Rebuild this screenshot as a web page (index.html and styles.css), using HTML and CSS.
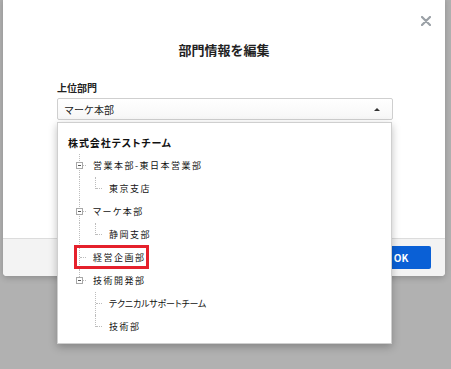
FILE: index.html
```html
<!DOCTYPE html>
<html lang="ja">
<head>
    <meta charset="UTF-8">
    <title>部門情報を編集</title>
    <link rel="stylesheet" href="styles.css">
</head>
<body>
    <div class="modal">
        <button class="close" aria-label="閉じる">
            <svg width="10" height="10" viewBox="0 0 10 10"><path d="M1 1L9 9M9 1L1 9" stroke="#9aa0a6" stroke-width="2.2" stroke-linecap="round"/></svg>
        </button>
        <div class="modal-head">
            <h2>部門情報を編集</h2>
        </div>
        <div class="modal-body">
            <label class="field-label">上位部門</label>
            <div class="select">
                <span>マーケ本部</span>
                <span class="caret"></span>
            </div>
        </div>
        <div class="modal-foot">
            <button class="btn-ok">OK</button>
        </div>

        <div class="dropdown">
            <div class="row root">株式会社テストチーム</div>
            <div class="row">
                <span class="cell tee"><i class="toggle"></i></span>
                <span class="label">営業本部-東日本営業部</span>
            </div>
            <div class="row">
                <span class="cell line"></span>
                <span class="cell elbow"></span>
                <span class="label">東京支店</span>
            </div>
            <div class="row">
                <span class="cell tee"><i class="toggle"></i></span>
                <span class="label">マーケ本部</span>
            </div>
            <div class="row">
                <span class="cell line"></span>
                <span class="cell elbow"></span>
                <span class="label">静岡支部</span>
            </div>
            <div class="row">
                <span class="cell tee"></span>
                <span class="label">経営企画部</span>
                <span class="mark"></span>
            </div>
            <div class="row">
                <span class="cell elbow"><i class="toggle"></i></span>
                <span class="label">技術開発部</span>
            </div>
            <div class="row">
                <span class="cell"></span>
                <span class="cell tee"></span>
                <span class="label narrow">テクニカルサポートチーム</span>
            </div>
            <div class="row">
                <span class="cell"></span>
                <span class="cell elbow"></span>
                <span class="label">技術部</span>
            </div>
        </div>
    </div>
</body>
</html>
```

FILE: styles.css
```css
body {
    margin: 0;
    background: #b1b1b1;
    font-family: "Noto Sans CJK JP", "Noto Sans", sans-serif;
    color: #222;
    height: 369px;
    overflow: hidden;
}
.modal {
    position: relative;
    width: 442px;
    margin: -4px 0 0 3px;
    background: #fff;
    border-radius: 4px;
    box-shadow: 0 2px 6px rgba(0, 0, 0, 0.2);
}
.close {
    position: absolute;
    top: 20px;
    right: 14px;
    padding: 0;
    border: none;
    background: none;
    line-height: 0;
}
.modal-head {
    padding-top: 46px;
    text-align: center;
}
.modal-head h2 {
    margin: 0;
    font-size: 13px;
    line-height: 16px;
    font-weight: bold;
    color: #222;
}
.modal-body {
    padding: 24px 0 118px 54px;
}
.field-label {
    display: block;
    font-size: 10px;
    line-height: 12px;
    font-weight: bold;
    margin-bottom: 4px;
}
.select {
    box-sizing: border-box;
    width: 336px;
    height: 22px;
    display: flex;
    align-items: center;
    justify-content: space-between;
    padding: 0 12px 0 6px;
    border: 1px solid #cfcfcf;
    border-radius: 2px;
    background: linear-gradient(#fff, #f7f7f7);
    font-size: 10px;
}
.caret {
    width: 0;
    height: 0;
    border-left: 3px solid transparent;
    border-right: 3px solid transparent;
    border-bottom: 3px solid #333;
}
.modal-foot {
    box-sizing: border-box;
    height: 38px;
    border-top: 1px solid #dcdcdc;
    background: #f3f3f3;
    border-radius: 0 0 4px 4px;
    display: flex;
    justify-content: flex-end;
    align-items: flex-start;
    padding: 7px 14px 0 0;
}
.btn-ok {
    width: 60px;
    height: 23px;
    border: none;
    border-radius: 2px;
    background: #0a60d6;
    color: #fff;
    font-family: inherit;
    font-size: 10px;
    font-weight: bold;
}
.dropdown {
    position: absolute;
    left: 54px;
    top: 126px;
    width: 335px;
    height: 222px;
    box-sizing: border-box;
    padding: 8px 0 0 10px;
    background: #fff;
    border: 1px solid #cfcfcf;
    box-shadow: 0 3px 8px rgba(0, 0, 0, 0.25);
}
.row {
    position: relative;
    display: flex;
    align-items: stretch;
    height: 23px;
    padding-left: 4px;
    font-size: 9px;
    font-feature-settings: "palt";
    letter-spacing: 1.5px;
    color: #111;
}
.row.root {
    padding-left: 0;
    align-items: center;
    font-weight: bold;
    font-size: 10px;
    letter-spacing: 0.9px;
}
.label {
    align-self: center;
    margin-left: 5px;
}
.label.narrow {
    letter-spacing: -0.2px;
}
.cell {
    position: relative;
    width: 16px;
    flex: none;
}
.line::before,
.tee::before,
.elbow::before {
    content: "";
    position: absolute;
    left: 7px;
    top: 0;
    bottom: 0;
    border-left: 1px dotted #bdbdbd;
}
.elbow::before {
    bottom: 50%;
}
.tee::after,
.elbow::after {
    content: "";
    position: absolute;
    left: 8px;
    top: 11px;
    width: 6px;
    border-top: 1px dotted #bdbdbd;
}
.toggle {
    position: absolute;
    left: 4px;
    top: 8px;
    width: 5px;
    height: 5px;
    border: 1px solid #a8a8a8;
    background: #fff;
    z-index: 1;
}
.toggle::before {
    content: "";
    position: absolute;
    left: 1px;
    right: 1px;
    top: 2px;
    border-top: 1px solid #555;
}
.mark {
    position: absolute;
    left: 6px;
    top: -1px;
    width: 75px;
    height: 24px;
    box-sizing: border-box;
    border: 3px solid #e5202b;
}
```
